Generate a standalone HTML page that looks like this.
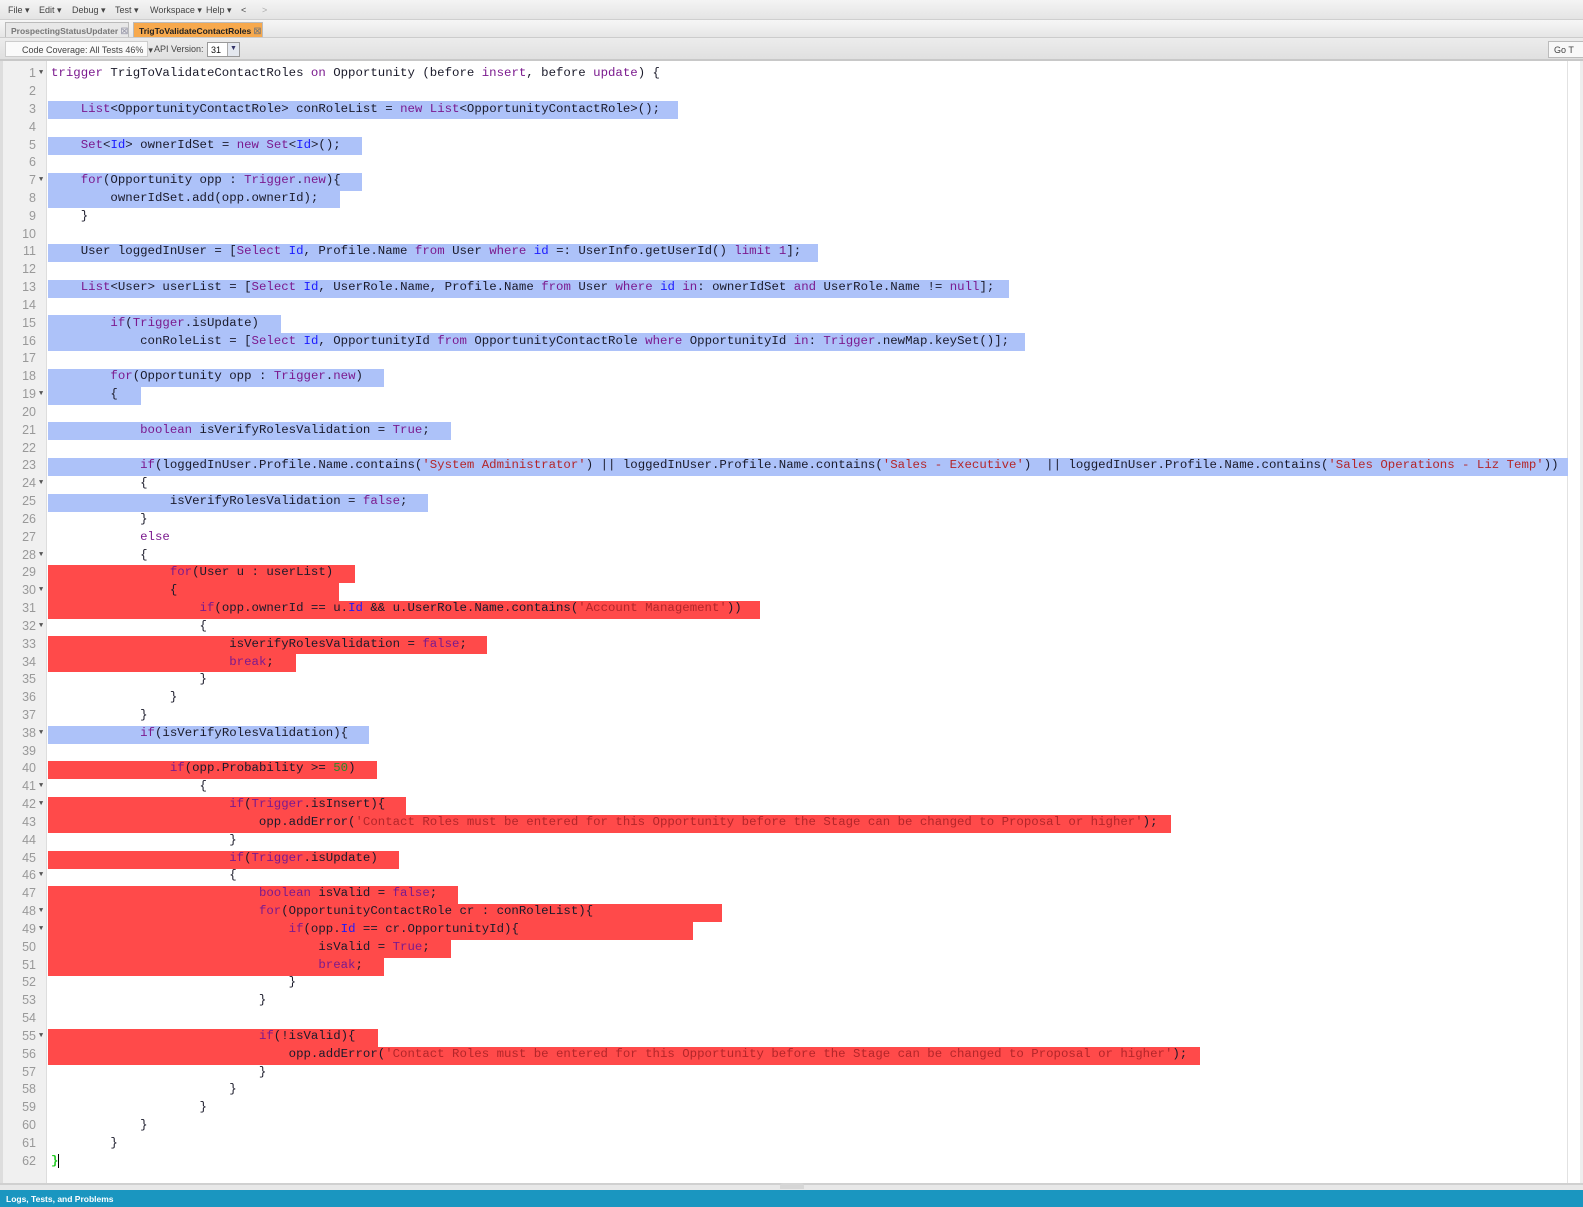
<!DOCTYPE html>
<html><head><meta charset="utf-8">
<style>
*{margin:0;padding:0;box-sizing:border-box}
body{width:1583px;height:1207px;overflow:hidden;background:#fff;font-family:"Liberation Sans",sans-serif;position:relative}
.menu{position:absolute;left:0;top:0;width:1583px;height:20px;background:linear-gradient(#f4f4f4,#e4e4e4);border-bottom:1px solid #cfcfcf;font-size:9px;color:#444}
.menu span{position:absolute;top:5px}
.tabs{position:absolute;left:0;top:20px;width:1583px;height:18px;background:linear-gradient(#f6f6f6,#e6e6e6);border-bottom:1px solid #ccc}
.tab{position:absolute;top:2px;height:15px;font-size:8.5px;font-weight:bold;padding:3px 4px 0 5px;border:1px solid #bbb;border-bottom:none;white-space:nowrap}
.tb{position:absolute;left:0;top:38px;width:1583px;height:23px;background:linear-gradient(#ececec,#e0e0e0);border-bottom:2px solid #c8c8c8;font-size:9px;color:#444}
.gut{position:absolute;left:0;top:61px;width:47px;height:1122px;background:#f0f0f0;border-right:1px solid #ddd;border-left:3px solid #ddd}
.hls{position:absolute;left:0;top:2px;width:1583px;height:1100px}
.hl{position:absolute;left:48px;height:18px}
.b{background:#adc2f9}.r{background:#ff4a4a}
.code{position:absolute;left:0;top:65.2px;width:1583px;font-family:"Liberation Mono",monospace;font-size:12.38px;line-height:17.84px;color:#1a1a2a}
.ln{display:block;height:17.84px;position:relative}
.n{position:absolute;left:0;width:36px;text-align:right;color:#999;font-family:"Liberation Sans",sans-serif;font-size:12.5px}
.f{position:absolute;left:39px;color:#555;font-size:7px}
.t{position:absolute;left:51px;white-space:pre}
.k{color:#7b1a8e}.i{color:#1a1aff}.s{color:#b3262a}.g{color:#2a8a2a}
</style></head><body>
<div class="menu"><span style="left:8px">File ▾</span><span style="left:39px">Edit ▾</span><span style="left:72px">Debug ▾</span><span style="left:115px">Test ▾</span><span style="left:150px">Workspace ▾</span><span style="left:206px">Help ▾</span><span style="left:241px">&lt;</span><span style="left:262px;color:#aaa">&gt;</span></div>
<div class="tabs">
<div class="tab" style="left:5px;width:124px;color:#777;background:#e8e8e8">ProspectingStatusUpdater <span style="color:#99a">☒</span></div>
<div class="tab" style="left:133px;width:130px;color:#222;background:#f7a94d">TrigToValidateContactRoles <span style="color:#777">☒</span></div>
</div>
<div class="tb">
<div style="position:absolute;left:5px;top:3px;width:143px;height:16px;background:#fafafa;border:1px solid #ccc;padding:3px 0 0 16px;white-space:nowrap">Code Coverage: All Tests 46% &nbsp;▾</div>
<div style="position:absolute;left:154px;top:6px">API Version:</div>
<div style="position:absolute;left:207px;top:4px;width:33px;height:15px;background:#fff;border:1px solid #999;padding:2px 0 0 3px;color:#111">31<span style="position:absolute;right:0;top:0;width:12px;height:13px;background:#e4e8ef;border-left:1px solid #aaa;text-align:center;font-size:7px;padding-top:2px;color:#336">▼</span></div>
<div style="position:absolute;left:1548px;top:3px;width:40px;height:17px;background:#f8f8f8;border:1px solid #bbb;padding:3px 0 0 5px">Go T</div>
</div>
<div class="gut"></div>
<div style="position:absolute;left:1567px;top:61px;width:1px;height:1122px;background:#e2e2e2"></div>
<div style="position:absolute;left:1580px;top:61px;width:3px;height:1122px;background:#eee"></div>
<div class="hls">
<div class="hl b" style="top:99.2px;width:630px"></div>
<div class="hl b" style="top:134.9px;width:314px"></div>
<div class="hl b" style="top:170.6px;width:314px"></div>
<div class="hl b" style="top:188.4px;width:292px"></div>
<div class="hl b" style="top:241.9px;width:770px"></div>
<div class="hl b" style="top:277.6px;width:961px"></div>
<div class="hl b" style="top:313.3px;width:233px"></div>
<div class="hl b" style="top:331.1px;width:977px"></div>
<div class="hl b" style="top:366.8px;width:336px"></div>
<div class="hl b" style="top:384.7px;width:93px"></div>
<div class="hl b" style="top:420.3px;width:403px"></div>
<div class="hl b" style="top:456px;width:1520px"></div>
<div class="hl b" style="top:491.7px;width:380px"></div>
<div class="hl r" style="top:563.1px;width:307px"></div>
<div class="hl r" style="top:580.9px;width:291px"></div>
<div class="hl r" style="top:598.8px;width:712px"></div>
<div class="hl r" style="top:634.4px;width:439px"></div>
<div class="hl r" style="top:652.3px;width:248px"></div>
<div class="hl b" style="top:723.6px;width:321px"></div>
<div class="hl r" style="top:759.3px;width:329px"></div>
<div class="hl r" style="top:795px;width:358px"></div>
<div class="hl r" style="top:812.8px;width:1123px"></div>
<div class="hl r" style="top:848.5px;width:351px"></div>
<div class="hl r" style="top:884.2px;width:410px"></div>
<div class="hl r" style="top:902px;width:674px"></div>
<div class="hl r" style="top:919.9px;width:645px"></div>
<div class="hl r" style="top:937.7px;width:403px"></div>
<div class="hl r" style="top:955.6px;width:336px"></div>
<div class="hl r" style="top:1026.9px;width:330px"></div>
<div class="hl r" style="top:1044.8px;width:1152px"></div>
</div>
<div class="code"><span class="ln"><span class="n">1</span><span class="f">▼</span><span class="t"><span class="k">trigger</span> TrigToValidateContactRoles <span class="k">on</span> Opportunity (before <span class="k">insert</span>, before <span class="k">update</span>) {</span></span><span class="ln"><span class="n">2</span></span><span class="ln"><span class="n">3</span><span class="t">    <span class="k">List</span>&lt;OpportunityContactRole&gt; conRoleList = <span class="k">new</span> <span class="k">List</span>&lt;OpportunityContactRole&gt;();</span></span><span class="ln"><span class="n">4</span></span><span class="ln"><span class="n">5</span><span class="t">    <span class="k">Set</span>&lt;<span class="i">Id</span>&gt; ownerIdSet = <span class="k">new</span> <span class="k">Set</span>&lt;<span class="i">Id</span>&gt;();</span></span><span class="ln"><span class="n">6</span></span><span class="ln"><span class="n">7</span><span class="f">▼</span><span class="t">    <span class="k">for</span>(Opportunity opp : <span class="k">Trigger</span>.<span class="k">new</span>){</span></span><span class="ln"><span class="n">8</span><span class="t">        ownerIdSet.add(opp.ownerId);</span></span><span class="ln"><span class="n">9</span><span class="t">    }</span></span><span class="ln"><span class="n">10</span></span><span class="ln"><span class="n">11</span><span class="t">    User loggedInUser = [<span class="k">Select</span> <span class="i">Id</span>, Profile.Name <span class="k">from</span> User <span class="k">where</span> <span class="i">id</span> =: UserInfo.getUserId() <span class="k">limit</span> <span class="k">1</span>];</span></span><span class="ln"><span class="n">12</span></span><span class="ln"><span class="n">13</span><span class="t">    <span class="k">List</span>&lt;User&gt; userList = [<span class="k">Select</span> <span class="i">Id</span>, UserRole.Name, Profile.Name <span class="k">from</span> User <span class="k">where</span> <span class="i">id</span> <span class="k">in</span>: ownerIdSet <span class="k">and</span> UserRole.Name != <span class="k">null</span>];</span></span><span class="ln"><span class="n">14</span></span><span class="ln"><span class="n">15</span><span class="t">        <span class="k">if</span>(<span class="k">Trigger</span>.isUpdate)</span></span><span class="ln"><span class="n">16</span><span class="t">            conRoleList = [<span class="k">Select</span> <span class="i">Id</span>, OpportunityId <span class="k">from</span> OpportunityContactRole <span class="k">where</span> OpportunityId <span class="k">in</span>: <span class="k">Trigger</span>.newMap.keySet()];</span></span><span class="ln"><span class="n">17</span></span><span class="ln"><span class="n">18</span><span class="t">        <span class="k">for</span>(Opportunity opp : <span class="k">Trigger</span>.<span class="k">new</span>)</span></span><span class="ln"><span class="n">19</span><span class="f">▼</span><span class="t">        {</span></span><span class="ln"><span class="n">20</span></span><span class="ln"><span class="n">21</span><span class="t">            <span class="k">boolean</span> isVerifyRolesValidation = <span class="k">True</span>;</span></span><span class="ln"><span class="n">22</span></span><span class="ln"><span class="n">23</span><span class="t">            <span class="k">if</span>(loggedInUser.Profile.Name.contains(<span class="s">'System Administrator'</span>) || loggedInUser.Profile.Name.contains(<span class="s">'Sales - Executive'</span>)  || loggedInUser.Profile.Name.contains(<span class="s">'Sales Operations - Liz Temp'</span>))</span></span><span class="ln"><span class="n">24</span><span class="f">▼</span><span class="t">            {</span></span><span class="ln"><span class="n">25</span><span class="t">                isVerifyRolesValidation = <span class="k">false</span>;</span></span><span class="ln"><span class="n">26</span><span class="t">            }</span></span><span class="ln"><span class="n">27</span><span class="t">            <span class="k">else</span></span></span><span class="ln"><span class="n">28</span><span class="f">▼</span><span class="t">            {</span></span><span class="ln"><span class="n">29</span><span class="t">                <span class="k">for</span>(User u : userList)</span></span><span class="ln"><span class="n">30</span><span class="f">▼</span><span class="t">                {</span></span><span class="ln"><span class="n">31</span><span class="t">                    <span class="k">if</span>(opp.ownerId == u.<span class="i">Id</span> &amp;&amp; u.UserRole.Name.contains(<span class="s">'Account Management'</span>))</span></span><span class="ln"><span class="n">32</span><span class="f">▼</span><span class="t">                    {</span></span><span class="ln"><span class="n">33</span><span class="t">                        isVerifyRolesValidation = <span class="k">false</span>;</span></span><span class="ln"><span class="n">34</span><span class="t">                        <span class="k">break</span>;</span></span><span class="ln"><span class="n">35</span><span class="t">                    }</span></span><span class="ln"><span class="n">36</span><span class="t">                }</span></span><span class="ln"><span class="n">37</span><span class="t">            }</span></span><span class="ln"><span class="n">38</span><span class="f">▼</span><span class="t">            <span class="k">if</span>(isVerifyRolesValidation){</span></span><span class="ln"><span class="n">39</span></span><span class="ln"><span class="n">40</span><span class="t">                <span class="k">if</span>(opp.Probability &gt;= <span class="g">50</span>)</span></span><span class="ln"><span class="n">41</span><span class="f">▼</span><span class="t">                    {</span></span><span class="ln"><span class="n">42</span><span class="f">▼</span><span class="t">                        <span class="k">if</span>(<span class="k">Trigger</span>.isInsert){</span></span><span class="ln"><span class="n">43</span><span class="t">                            opp.addError(<span class="s">'Contact Roles must be entered for this Opportunity before the Stage can be changed to Proposal or higher'</span>);</span></span><span class="ln"><span class="n">44</span><span class="t">                        }</span></span><span class="ln"><span class="n">45</span><span class="t">                        <span class="k">if</span>(<span class="k">Trigger</span>.isUpdate)</span></span><span class="ln"><span class="n">46</span><span class="f">▼</span><span class="t">                        {</span></span><span class="ln"><span class="n">47</span><span class="t">                            <span class="k">boolean</span> isValid = <span class="k">false</span>;</span></span><span class="ln"><span class="n">48</span><span class="f">▼</span><span class="t">                            <span class="k">for</span>(OpportunityContactRole cr : conRoleList){</span></span><span class="ln"><span class="n">49</span><span class="f">▼</span><span class="t">                                <span class="k">if</span>(opp.<span class="i">Id</span> == cr.OpportunityId){</span></span><span class="ln"><span class="n">50</span><span class="t">                                    isValid = <span class="k">True</span>;</span></span><span class="ln"><span class="n">51</span><span class="t">                                    <span class="k">break</span>;</span></span><span class="ln"><span class="n">52</span><span class="t">                                }</span></span><span class="ln"><span class="n">53</span><span class="t">                            }</span></span><span class="ln"><span class="n">54</span></span><span class="ln"><span class="n">55</span><span class="f">▼</span><span class="t">                            <span class="k">if</span>(!isValid){</span></span><span class="ln"><span class="n">56</span><span class="t">                                opp.addError(<span class="s">'Contact Roles must be entered for this Opportunity before the Stage can be changed to Proposal or higher'</span>);</span></span><span class="ln"><span class="n">57</span><span class="t">                            }</span></span><span class="ln"><span class="n">58</span><span class="t">                        }</span></span><span class="ln"><span class="n">59</span><span class="t">                    }</span></span><span class="ln"><span class="n">60</span><span class="t">            }</span></span><span class="ln"><span class="n">61</span><span class="t">        }</span></span><span class="ln"><span class="n">62</span><span class="t"><span style="color:#2c2;font-weight:bold">}</span><span style="border-left:1px solid #000"></span></span></span></div>
<div style="position:absolute;left:0;top:1183px;width:1583px;height:2px;background:#d0d0d0"></div>
<div style="position:absolute;left:0;top:1185px;width:1583px;height:5px;background:#e8e8e8"></div>
<div style="position:absolute;left:780px;top:1183px;width:24px;height:6px;background:#d6d6d6;border-radius:3px 3px 0 0"></div>
<div style="position:absolute;left:0;top:1190px;width:1583px;height:17px;background:#1a96c0;color:#fff;font-size:8.5px;font-weight:bold;padding:4px 0 0 6px">Logs, Tests, and Problems</div>
</body></html>
